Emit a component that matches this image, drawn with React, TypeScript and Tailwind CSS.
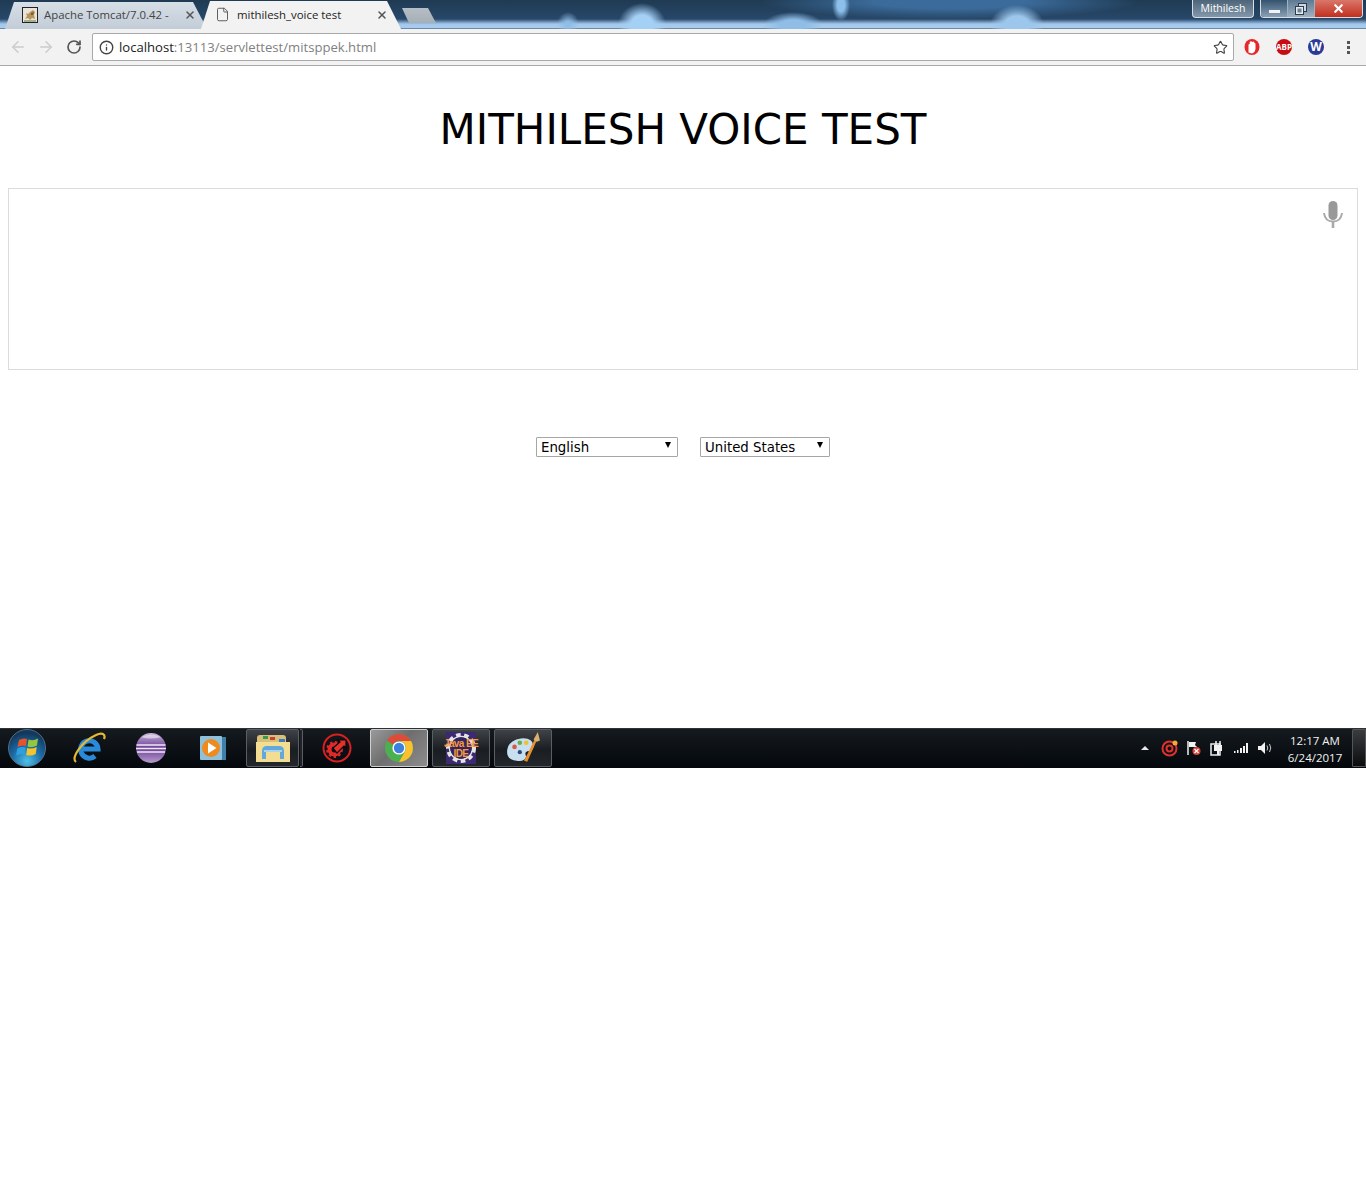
import React from 'react'
import { ArrowLeft, ArrowRight, RotateCw, Info, Star, X, File } from 'lucide-react'

const TomcatIcon = () => (
  <svg width="16" height="16" viewBox="0 0 16 16" className="shrink-0">
    <rect x="0.5" y="0.5" width="15" height="15" fill="#e9e4da" stroke="#222" />
    <path d="M3 12 L5 9 L4 6 L6 7 L8 5 L11 3 L13 5 L12 8 L13 12 L10 11 L8 13 L6 11 Z" fill="#b8935a" />
    <path d="M9 6 L12 5 L11 8 L9 8 Z" fill="#7a5c34" />
    <path d="M2 14 L14 14" stroke="#5a7a3a" />
  </svg>
)

const Tab = ({ title, active, icon }: { title: string; active?: boolean; icon: React.ReactNode }) => (
  <div
    className={
      active
        ? 'flex items-center h-[28px] w-[200px] -ml-[6px] pl-[14px] pr-[12px] pb-[1px] bg-[#f2f2f2] [clip-path:polygon(0_100%,9px_0,186px_0,100%_100%)]'
        : 'flex items-center h-[27px] w-[202px] pl-[17px] pr-[11px] pb-[1px] bg-[linear-gradient(#d6dee6,#c3cdd8)] [clip-path:polygon(0_100%,9px_0,188px_0,100%_100%)]'
    }
  >
    {icon}
    <span className={active ? 'ml-[7px] text-[11.4px] text-[#222] flex-1 truncate' : 'ml-[6px] text-[11.4px] text-[#444] flex-1 truncate'}>{title}</span>
    <X size={12} strokeWidth={3} className={active ? 'text-[#555] mr-[1px]' : 'text-[#555]'} />
  </div>
)

const WindowControls = () => (
  <div className="flex items-start h-[19px]">
    <div className="flex items-center justify-center w-[62px] h-[18px] rounded-b-[4px] border border-t-0 border-[#d5dde6] bg-[linear-gradient(#4d6479,#8397a9)] text-[10.5px] text-white">
      Mithilesh
    </div>
    <div className="flex ml-[6px] h-[18px] rounded-b-[4px] border border-t-0 border-[#d5dde6] overflow-hidden">
      <div className="flex items-center justify-center pt-[6px] w-[27px] bg-[linear-gradient(#34536f,#8ba0b4)] border-r border-[#9fb0c0]">
        <div className="w-[11px] h-[3px] bg-[#eef2f5]" />
      </div>
      <div className="flex items-center justify-center w-[27px] bg-[linear-gradient(#5d7a93,#a0b1c0)] border-r border-[#9fb0c0]">
        <svg width="12" height="12" viewBox="0 0 12 12">
          <rect x="3.5" y="0.5" width="8" height="8" fill="#cfd8e0" stroke="#2e3d4c" />
          <rect x="0.5" y="3.5" width="8" height="8" fill="#e4eaef" stroke="#2e3d4c" />
          <rect x="2.5" y="5.5" width="4" height="4" fill="#6c8296" />
        </svg>
      </div>
      <div className="flex items-center justify-center w-[47px] bg-[linear-gradient(#d9776a,#c22f1d)]">
        <X size={13} strokeWidth={4} className="text-white" />
      </div>
    </div>
  </div>
)

const OperaIcon = () => (
  <svg width="16" height="18" viewBox="0 0 16 18">
    <ellipse cx="8" cy="9" rx="7.5" ry="8" fill="#e6262a" />
    <path d="M4.5 14.5 V7 Q4.5 5.5 5.7 6 V4 Q7 2.5 8 4 Q9.7 2.5 10.3 4.7 Q11.8 4.8 11.5 7 V11 Q11 14.5 8 15.5 Z" fill="#fff" />
  </svg>
)

const AbpIcon = () => (
  <div className="flex items-center justify-center w-[16px] h-[16px] rounded-full bg-[#c70d12] text-[8px] leading-none font-bold text-white">
    ABP
  </div>
)

const WIcon = () => (
  <div className="flex items-center justify-center w-[16px] h-[16px] rounded-full bg-[#2a3a96] text-[12px] leading-none font-bold text-white">
    W
  </div>
)

const MicIcon = () => (
  <svg width="20" height="27" viewBox="0 0 20 27">
    <rect x="5.5" y="0" width="9" height="19" rx="4.5" fill="#999" />
    <path d="M1 12 Q2 20.5 10 20.5 Q18 20.5 19 12" fill="none" stroke="#aaa" strokeWidth="2" />
    <rect x="8.7" y="20" width="2.6" height="7" fill="#aaa" />
  </svg>
)

const StartOrb = () => (
  <svg width="38" height="38" viewBox="0 0 38 38">
    <defs>
      <radialGradient id="orb" cx="50%" cy="85%" r="75%">
        <stop offset="0%" stopColor="#4fc0e8" />
        <stop offset="55%" stopColor="#1c6aa4" />
        <stop offset="100%" stopColor="#12385c" />
      </radialGradient>
    </defs>
    <circle cx="19" cy="19" r="18.5" fill="url(#orb)" stroke="#5f7f99" strokeWidth="0.8" />
    <path d="M11 11 Q15 8.5 19 10 L18 17 Q14 15.5 9.5 18 Z" fill="#e8542a" />
    <path d="M20.5 10.5 Q25 12.5 30 9.5 L29 16.5 Q24 19 19.5 17.5 Z" fill="#93c83e" />
    <path d="M9.3 19.5 Q14 17 17.7 18.7 L16.7 25.5 Q12.5 24 8 26.5 Z" fill="#2e9fe0" />
    <path d="M19.2 19 Q24 20.5 28.7 18 L27.7 25 Q23 27.5 18.2 26 Z" fill="#f7c52b" />
    <path d="M4 14 Q19 -2 34 14 Q26 6 19 6 Q12 6 4 14 Z" fill="#fff" opacity="0.25" />
  </svg>
)

const IeIcon = () => (
  <svg width="34" height="34" viewBox="0 0 34 34">
    <path d="M9.5 18 H26 A8.7 8.7 0 1 0 23 25" fill="none" stroke="#2a8ad8" strokeWidth="5" />
    <path d="M4 31 C-1 27 9 11 24 4 C30 1 34 3 32 8" fill="none" stroke="#e8b92f" strokeWidth="2.2" />
  </svg>
)

const EclipseIcon = () => (
  <svg width="32" height="32" viewBox="0 0 32 32">
    <defs>
      <linearGradient id="ecl" x1="0" y1="0" x2="0" y2="1">
        <stop offset="0%" stopColor="#c9b4da" />
        <stop offset="50%" stopColor="#6a3d94" />
        <stop offset="100%" stopColor="#b79ccd" />
      </linearGradient>
    </defs>
    <circle cx="16" cy="16" r="15" fill="url(#ecl)" />
    <path d="M1.5 13 H30.5 M1 16.5 H31 M2 20 H30" stroke="#efe6f5" strokeWidth="1.4" />
    <path d="M6 5 Q16 0 26 5 Q16 8 6 5 Z" fill="#fff" opacity="0.5" />
  </svg>
)

const MediaIcon = () => (
  <svg width="28" height="28" viewBox="0 0 28 28">
    <rect x="4" y="3" width="23" height="23" fill="#3f7fa8" />
    <rect x="1" y="2" width="22" height="24" rx="1" fill="#8fc0dc" />
    <circle cx="12" cy="14" r="9" fill="#ef8a1d" />
    <path d="M9 8.5 L17.5 14 L9 19.5 Z" fill="#fff" />
  </svg>
)

const FolderIcon = () => (
  <svg width="36" height="32" viewBox="0 0 36 32">
    <path d="M2 6 Q2 3 5 3 H28 Q31 3 31 6 V10 H2 Z" fill="#d9c07a" />
    <rect x="8" y="4" width="5" height="3" fill="#3a9a4a" />
    <rect x="15" y="5" width="5" height="3" fill="#c8432e" />
    <rect x="24" y="7" width="6" height="3" fill="#3a80c0" />
    <path d="M1 10 H35 V30 H1 Z" fill="#f2dd93" />
    <path d="M9 27 V19 Q9 16 12 16 H24 Q27 16 27 19 V27" fill="none" stroke="#62a8d8" strokeWidth="4" />
    <path d="M9 19 H27" stroke="#a8d4ee" strokeWidth="2" />
  </svg>
)

const BoosterIcon = () => (
  <svg width="30" height="30" viewBox="0 0 30 30">
    <circle cx="15" cy="15" r="13.5" fill="none" stroke="#d8201f" strokeWidth="2" />
    <circle cx="12.5" cy="16.5" r="5" fill="none" stroke="#e0282a" strokeWidth="4" />
    <circle cx="12.5" cy="16.5" r="7.4" fill="none" stroke="#e0282a" strokeWidth="2" strokeDasharray="2.5 2.5" />
    <path d="M11 15 L18 9 L16 7 H24 V15 L22 13 L15 20 Z" fill="#e8302a" stroke="#05090d" strokeWidth="1.2" />
  </svg>
)

const ChromeIcon = () => (
  <svg width="30" height="30" viewBox="0 0 30 30">
    <circle cx="15" cy="15" r="14" fill="#4caf50" />
    <path d="M15 1 A14 14 0 0 1 27.1 8 L15 8 A7 7 0 0 0 8.9 11.5 L3 7.5 A14 14 0 0 1 15 1 Z" fill="#df4a3a" />
    <path d="M27.1 8 A14 14 0 0 1 15 29 L21 18.5 A7 7 0 0 0 15 8 Z" fill="#fbc02d" />
    <circle cx="15" cy="15" r="6.6" fill="#fff" />
    <circle cx="15" cy="15" r="5.2" fill="#3e80e0" />
  </svg>
)

const JavaIdeIcon = () => (
  <div className="relative flex flex-col items-center justify-center w-[30px] h-[32px] pt-[1px] bg-[#3b2a72] text-[10px] leading-[10px] tracking-[-0.6px] font-bold text-[#f79a3c] font-['Liberation_Sans',sans-serif]">
    <svg width="30" height="32" viewBox="0 0 30 32" className="absolute inset-0">
      <circle cx="15" cy="16" r="13" fill="none" stroke="#e4e4e4" strokeWidth="4" strokeDasharray="4.5 3.5" />
      <circle cx="15" cy="16" r="11.5" fill="none" stroke="#e4e4e4" strokeWidth="1.5" />
      <circle cx="15" cy="16" r="10.7" fill="#33255f" />
    </svg>
    <span className="relative whitespace-nowrap">Java EE</span>
    <span className="relative">IDE</span>
  </div>
)

const PaintIcon = () => (
  <svg width="36" height="34" viewBox="0 0 34 32">
    <path d="M2 20 Q2 9 15 7 Q26 6 27 14 Q27 19 21 19 Q18 20 20 24 Q19 29 11 28 Q2 27 2 20 Z" fill="#c8dff0" />
    <circle cx="9" cy="15" r="2.2" fill="#d85a4a" />
    <circle cx="14" cy="11" r="2.2" fill="#6ab04a" />
    <circle cx="20" cy="11" r="2.2" fill="#f0c030" />
    <circle cx="14" cy="20" r="2" fill="#2a4a7a" />
    <path d="M18 28 L28 8 L30 9 L21 29 Z" fill="#e8902a" />
    <path d="M27 8 L31 1 L33 9 L30 10 Z" fill="#d8b070" />
  </svg>
)

const TaskButton = ({ active, children }: { active?: boolean; children: React.ReactNode }) => (
  <div
    className={
      active
        ? 'flex items-center justify-center w-[58px] h-[38px] rounded-[2px] border border-[#d0d0d0] bg-[linear-gradient(135deg,#9a9a9a,#6e6e6e_45%,#8d8d8d)]'
        : 'flex items-center justify-center w-[58px] h-[38px] rounded-[2px] border border-[#5a5f63] bg-[linear-gradient(#3f4347,#1a1e22_55%,#23272b)]'
    }
  >
    {children}
  </div>
)

const TaskSlot = ({ children }: { children: React.ReactNode }) => (
  <div className="flex items-center justify-center w-[58px] h-[38px]">{children}</div>
)

const TrayIcons = () => (
  <div className="flex items-center">
    <div className="w-0 h-0 border-x-[4px] border-x-transparent border-b-[4px] border-b-[#e8e8e8]" />
    <svg width="18" height="18" viewBox="0 0 18 18" className="ml-[12px]">
      <circle cx="8.5" cy="9.5" r="7" fill="none" stroke="#e0302c" strokeWidth="2" />
      <circle cx="8.5" cy="9.5" r="3" fill="none" stroke="#e0302c" strokeWidth="2" />
      <circle cx="14" cy="4" r="2.5" fill="#f2a93a" />
    </svg>
    <svg width="16" height="16" viewBox="0 0 16 16" className="ml-[7px]">
      <path d="M2 1 V15" stroke="#eee" strokeWidth="1.5" />
      <path d="M3 2 H10 L9 5 L11 7 H3 Z" fill="#f2f2f2" />
      <circle cx="10.5" cy="11" r="4" fill="#d8443a" />
      <path d="M8.5 9 L12.5 13 M12.5 9 L8.5 13" stroke="#fff" strokeWidth="1.2" />
    </svg>
    <svg width="16" height="16" viewBox="0 0 16 16" className="ml-[7px]">
      <rect x="2" y="4" width="9" height="11" fill="none" stroke="#eee" strokeWidth="1.5" />
      <rect x="5" y="5" width="8" height="6" fill="#f2f2f2" />
      <path d="M7 1 V5 M11 1 V5" stroke="#f2f2f2" strokeWidth="1.5" />
      <path d="M9 11 V15" stroke="#f2f2f2" strokeWidth="2" />
    </svg>
    <svg width="16" height="12" viewBox="0 0 16 12" className="ml-[8px]">
      <path d="M1 9 H2.5 V11 H1 Z M4 8 H5.5 V11 H4 Z M7 6 H9 V11 H7 Z M10 4 H12 V11 H10 Z M13 1 H15 V11 H13 Z" fill="#f2f2f2" />
    </svg>
    <svg width="16" height="14" viewBox="0 0 16 14" className="ml-[8px]">
      <path d="M1 5 H4 L8 1 V13 L4 9 H1 Z" fill="#f2f2f2" />
      <path d="M10 4.5 Q11.5 7 10 9.5 M12.5 3 Q15 7 12.5 11" fill="none" stroke="#c8c8c8" />
    </svg>
  </div>
)

const Taskbar = () => (
  <div className="flex items-center h-[40px] pb-[1px] border-t border-[#2c3238] bg-[linear-gradient(#151a1f,#04080c)] text-white">
    <div className="flex items-center justify-center w-[54px] h-[38px]">
      <StartOrb />
    </div>
    <div className="flex items-center gap-[4px] ml-[6px]">
      <TaskSlot><IeIcon /></TaskSlot>
      <TaskSlot><EclipseIcon /></TaskSlot>
      <TaskSlot><MediaIcon /></TaskSlot>
      <div className="flex w-[58px] h-[38px]">
        <div className="flex items-center justify-center w-[53px] h-[38px] rounded-[2px] border border-[#5a5f63] bg-[linear-gradient(#3f4347,#1a1e22_55%,#23272b)]">
          <FolderIcon />
        </div>
        <div className="w-[3px] h-[38px] ml-[1px] rounded-r-[2px] border border-l-0 border-[#5a5f63] bg-[#1f2327]" />
      </div>
      <TaskSlot><BoosterIcon /></TaskSlot>
      <TaskButton active><ChromeIcon /></TaskButton>
      <TaskButton><JavaIdeIcon /></TaskButton>
      <TaskButton><PaintIcon /></TaskButton>
    </div>
    <div className="flex items-center ml-auto">
      <TrayIcons />
      <div className="flex flex-col items-center w-[60px] ml-[12px] pt-[1px] text-[11.5px] leading-[17px] text-[#f2f2f2]">
        <span>12:17 AM</span>
        <span>6/24/2017</span>
      </div>
      <div className="w-[14px] h-[38px] ml-[7px] rounded-l-[1px] border border-[#555] bg-[linear-gradient(#3a3d40,#0a0c0e)]" />
    </div>
  </div>
)

const Dropdown = ({ value, width }: { value: string; width: string }) => (
  <div className={`relative ${width}`}>
    <select
      defaultValue={value}
      className="w-full h-[20px] pl-[4px] appearance-none rounded-[1px] border border-[#a6a6a6] bg-white text-[13.33px] text-black"
      style={{ fontFamily: '"DejaVu Sans", Verdana, sans-serif' }}
    >
      <option>{value}</option>
    </select>
    <span className="absolute right-[7px] top-[7px] w-0 h-0 border-x-[3px] border-x-transparent border-t-[6px] border-t-black" />
  </div>
)

export default function App() {
  return (
    <div className="flex flex-col min-h-[1200px] bg-white font-['Open_Sans','Noto_Sans',sans-serif]">
      <div className="flex justify-between h-[29px] pl-[5px] pr-[3px] bg-[radial-gradient(ellipse_11px_12px_at_568px_24px,#8fbde6_15%,transparent),radial-gradient(ellipse_24px_22px_at_642px_25px,#a5d0f5_45%,transparent),radial-gradient(ellipse_30px_13px_at_793px_25px,#8fbde6_40%,transparent),radial-gradient(ellipse_9px_16px_at_841px_5px,#8cc0ea_40%,transparent),radial-gradient(ellipse_27px_20px_at_1017px_25px,#9cc6ec_45%,transparent),radial-gradient(ellipse_190px_17px_at_950px_2px,#3b6b9a_40%,transparent),linear-gradient(#1f3a52,#28486a_19px,#a3c8ec_24px,#a9cdef_28px,#6d8aa5_28px)]">
        <div className="flex items-end">
          <Tab title="Apache Tomcat/7.0.42 -" icon={<TomcatIcon />} />
          <Tab title="mithilesh_voice test" active icon={<File size={15} strokeWidth={1.5} className="text-[#555] shrink-0" />} />
          <div className="w-[34px] h-[15px] mb-[6px] ml-[1px] bg-[linear-gradient(#b6bdc5,#a6aeb6)] [clip-path:polygon(0_0,26px_0,100%_100%,7px_100%)]" />
        </div>
        <WindowControls />
      </div>

      <div className="flex items-center h-[37px] border-b border-[#a8a8a8] bg-[#f2f2f2]">
        <div className="flex items-center justify-center w-[32px] ml-[2px]">
          <ArrowLeft size={18} className="text-[#ccc]" />
        </div>
        <div className="flex items-center justify-center w-[24px]">
          <ArrowRight size={18} className="text-[#ccc]" />
        </div>
        <div className="flex items-center justify-center w-[32px]">
          <RotateCw size={16} strokeWidth={2.5} className="text-[#555]" />
        </div>
        <div className="flex items-center flex-1 h-[28px] ml-[2px] pl-[6px] pr-[5px] pt-[1px] rounded-[2px] border border-[#a9a9a9] bg-white text-[13.1px]">
          <Info size={15} strokeWidth={2.2} className="text-[#444]" />
          <span className="ml-[5px] text-[#222]">localhost</span>
          <span className="text-[#808080]">:13113/servlettest/mitsppek.html</span>
          <Star size={15} strokeWidth={1.8} className="ml-auto text-[#444]" />
        </div>
        <div className="flex items-center w-[132px] pl-[10px]">
          <div className="flex items-center justify-center w-[16px]"><OperaIcon /></div>
          <div className="ml-[16px]"><AbpIcon /></div>
          <div className="ml-[16px]"><WIcon /></div>
          <div className="flex flex-col gap-[2px] ml-[23px]">
            <div className="w-[3px] h-[3px] bg-[#555]" />
            <div className="w-[3px] h-[3px] bg-[#555]" />
            <div className="w-[3px] h-[3px] bg-[#555]" />
          </div>
        </div>
      </div>

      <div className="flex flex-col h-[662px] px-[8px]" style={{ fontFamily: '"DejaVu Sans", Verdana, sans-serif' }}>
        <h1 className="mt-[39px] text-center text-[42px] leading-[50px] text-black">MITHILESH VOICE TEST</h1>
        <div className="flex justify-end h-[182px] mt-[33px] pt-[12px] pr-[14px] border border-[#dcdcdc]">
          <MicIcon />
        </div>
        <div className="flex justify-center gap-[22px] mt-[65px]">
          <Dropdown value="English" width="w-[142px]" />
          <Dropdown value="United States" width="w-[130px]" />
        </div>
      </div>

      <Taskbar />
    </div>
  )
}
